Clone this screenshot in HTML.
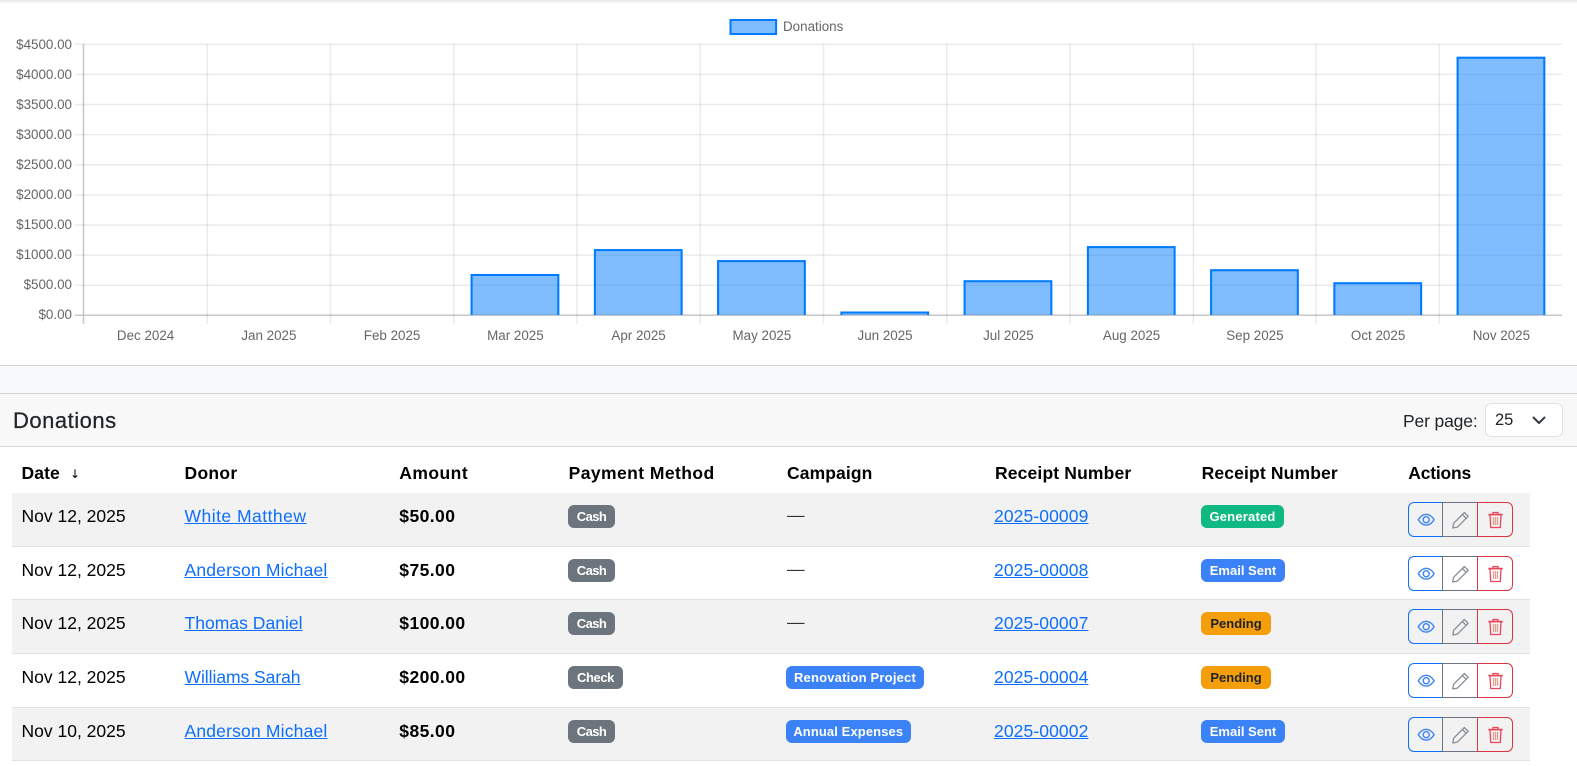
<!DOCTYPE html>
<html lang="en">
<head>
<meta charset="utf-8">
<title>Donations</title>
<style>
html,body{margin:0;padding:0;background:#fff;}
body{position:relative;width:1577px;height:766px;overflow:hidden;font-family:"Liberation Sans",Arial,sans-serif;color:#000;}
.abs{position:absolute;}
#shadow{left:0;top:0;width:1577px;height:4px;background:linear-gradient(#e6e6e6,#fff);}
#chart{left:0;top:0;}
#chart text{font-family:"Liberation Sans",Arial,sans-serif;font-size:13.4px;fill:#666;}
#band{left:0;top:365px;width:1577px;background:#f8f9fa;border-top:1px solid #d4d4d4;border-bottom:1px solid #d4d4d4;box-sizing:content-box;height:27px;}
#head{left:0;top:394px;width:1577px;height:53px;background:#f8f8f8;border-bottom:1px solid #d4d4d4;box-sizing:border-box;}
#title{left:13px;top:13px;font-size:22px;line-height:28px;color:#212529;letter-spacing:.5px;-webkit-text-stroke:.25px #212529;}
#pp{left:1403px;top:15px;font-size:17.5px;line-height:24px;color:#212529;letter-spacing:-.15px;}
#sel{left:1485px;top:9px;width:78px;height:34px;background:#fff;border:1px solid #dee2e6;border-radius:6px;box-sizing:border-box;}
#sel span{position:absolute;left:9px;top:4px;font-size:16.5px;line-height:24px;color:#212529;}
#sel svg{position:absolute;left:45px;top:11px;}
.th{top:461px;font-size:17.5px;font-weight:bold;line-height:24px;white-space:nowrap;}
.row{left:12px;width:1518px;box-sizing:border-box;border-bottom:1px solid #dee2e6;}
.odd{background:#f2f2f2;}
.c{position:absolute;top:11px;font-size:17.5px;line-height:24px;white-space:nowrap;color:#000;}
.c.b{font-weight:bold;letter-spacing:.42px;}
.c.dash{top:10px;left:775px;font-size:17.5px;color:#333;}
.c a{color:#0d6efd;text-decoration:underline;}
.pill{position:absolute;top:12px;height:23px;border-radius:6px;font-size:13px;font-weight:bold;line-height:24px;text-align:center;color:#fff;white-space:nowrap;}
.g{background:#6c757d;}.bl{background:#3b82f6;}.gr{background:#10b981;}.y{background:#f59e0b;color:#1f2328;}
.btns{position:absolute;left:1396px;top:9px;width:105px;height:35px;}
.btn{position:absolute;top:0;height:35px;box-sizing:border-box;border:1px solid;}
.v{left:0;width:35px;border-color:#0d6efd;border-radius:6px 0 0 6px;}
.e{left:34px;width:36px;border-color:#6c757d;}
.d{left:69px;width:36px;border-color:#dc3545;border-radius:0 6px 6px 0;}
.btn svg{position:absolute;left:0;top:0;}
</style>
</head>
<body>
<div id="shadow" class="abs"></div>

<svg id="chart" class="abs" width="1577" height="365" viewBox="0 0 1577 365">
  <g stroke="rgba(0,0,0,.08)" stroke-width="1.5" fill="none">
    <path d="M75 44.300H1562M75 74.400H1562M75 104.500H1562M75 134.600H1562M75 164.700H1562M75 194.900H1562M75 225H1562M75 255.100H1562M75 285.200H1562"/>
    <path d="M207.300 44V324M330.500 44V324M453.800 44V324M577 44V324M700.300 44V324M823.500 44V324M946.800 44V324M1070 44V324M1193.300 44V324M1316 44V324M1439.300 44V324"/>
  </g>
  <g stroke="rgba(0,0,0,.22)" stroke-width="1.500" fill="none">
    <path d="M83.500 44V324M75 315.300H1562"/>
  </g>
  <g fill="rgba(0,123,255,.5)">
    <rect x="470.600" y="274" width="88.700" height="41"/>
    <rect x="593.900" y="249.100" width="88.700" height="65.900"/>
    <rect x="717.100" y="260.100" width="88.700" height="54.900"/>
    <rect x="840.400" y="311.500" width="88.700" height="3.500"/>
    <rect x="963.600" y="280.300" width="88.700" height="34.700"/>
    <rect x="1086.900" y="246.100" width="88.700" height="68.900"/>
    <rect x="1210.100" y="269.200" width="88.700" height="45.800"/>
    <rect x="1333.400" y="282.200" width="88.700" height="32.800"/>
    <rect x="1456.600" y="56.700" width="88.700" height="258.300"/>
  </g>
  <g fill="none" stroke="#007bff" stroke-width="2">
    <path d="M471.600 315V275H558.300V315"/>
    <path d="M594.900 315V250.100H681.600V315"/>
    <path d="M718.100 315V261.100H804.800V315"/>
    <path d="M841.400 315V312.500H928.100V315"/>
    <path d="M964.600 315V281.300H1051.300V315"/>
    <path d="M1087.900 315V247.100H1174.600V315"/>
    <path d="M1211.100 315V270.200H1297.800V315"/>
    <path d="M1334.400 315V283.200H1421.100V315"/>
    <path d="M1457.600 315V57.700H1544.300V315"/>
  </g>
  <g text-anchor="end">
    <text x="72" y="49">$4500.00</text>
    <text x="72" y="79">$4000.00</text>
    <text x="72" y="109">$3500.00</text>
    <text x="72" y="139">$3000.00</text>
    <text x="72" y="169">$2500.00</text>
    <text x="72" y="199">$2000.00</text>
    <text x="72" y="229">$1500.00</text>
    <text x="72" y="259">$1000.00</text>
    <text x="72" y="289">$500.00</text>
    <text x="72" y="319">$0.00</text>
  </g>
  <g text-anchor="middle">
    <text x="145.600" y="340">Dec 2024</text>
    <text x="268.900" y="340">Jan 2025</text>
    <text x="392.100" y="340">Feb 2025</text>
    <text x="515.400" y="340">Mar 2025</text>
    <text x="638.600" y="340">Apr 2025</text>
    <text x="761.900" y="340">May 2025</text>
    <text x="885.100" y="340">Jun 2025</text>
    <text x="1008.400" y="340">Jul 2025</text>
    <text x="1131.600" y="340">Aug 2025</text>
    <text x="1254.900" y="340">Sep 2025</text>
    <text x="1378.100" y="340">Oct 2025</text>
    <text x="1501.400" y="340">Nov 2025</text>
  </g>
  <rect x="730.500" y="20" width="45.600" height="14" fill="rgba(0,123,255,.5)" stroke="#007bff" stroke-width="2"/>
  <text x="783" y="31">Donations</text>
</svg>

<div id="band" class="abs"></div>
<div id="head" class="abs">
  <div id="title" class="abs">Donations</div>
  <div id="pp" class="abs">Per page:</div>
  <div id="sel" class="abs"><span>25</span>
    <svg width="16" height="12" viewBox="0 0 16 12"><path d="M2.500 2.500L8 8l5.500-5.500" fill="none" stroke="#343a40" stroke-width="2" stroke-linecap="round" stroke-linejoin="round"/></svg>
  </div>
</div>

<div class="abs th" style="left:21.500px;letter-spacing:.1px">Date</div>
<div class="abs th" style="left:70px;top:462px;font-size:12px;font-weight:normal;font-family:'DejaVu Sans',sans-serif">↓</div>
<div class="abs th" style="left:184.500px;letter-spacing:.3px">Donor</div>
<div class="abs th" style="left:399.300px;letter-spacing:.45px">Amount</div>
<div class="abs th" style="left:568.600px;letter-spacing:.43px">Payment Method</div>
<div class="abs th" style="left:787px;letter-spacing:.1px">Campaign</div>
<div class="abs th" style="left:995px;letter-spacing:.15px">Receipt Number</div>
<div class="abs th" style="left:1201.600px;letter-spacing:.15px">Receipt Number</div>
<div class="abs th" style="left:1408.300px;letter-spacing:-.2px">Actions</div>

<div class="abs row odd" style="top:493px;height:54px">
  <div class="c" style="left:9.500px">Nov 12, 2025</div>
  <div class="c" style="left:172.500px;letter-spacing:.48px"><a>White Matthew</a></div>
  <div class="c b" style="left:387.300px">$50.00</div>
  <div class="pill g" style="left:556px;width:47px;letter-spacing:-.6px">Cash</div>
  <div class="c dash">—</div>
  <div class="c" style="left:982px;letter-spacing:.1px"><a>2025-00009</a></div>
  <div class="pill gr" style="left:1189px;width:83px;letter-spacing:.2px">Generated</div>
  <div class="btns">
    <div class="btn v"><svg width="33" height="33" viewBox="0 0 33 33"><g fill="none" stroke="#3d84fb" stroke-width="1.400"><path d="M9.300 16.700c2-3.200 4.800-5.400 7.900-5.400s5.900 2.200 7.900 5.400c-2 3.200-4.800 5.400-7.900 5.400s-5.900-2.200-7.900-5.400z"/><circle cx="17.200" cy="16.700" r="3"/></g></svg></div>
    <div class="btn e"><svg width="34" height="33" viewBox="0 0 34 33"><g fill="none" stroke="#868e96" stroke-width="1.300" stroke-linejoin="round"><path d="M21.400 9.500l3.800 3.800-10.800 10.800-4.600.9.800-4.700z"/><path d="M19.400 11.500l3.800 3.800"/></g></svg></div>
    <div class="btn d"><svg width="34" height="33" viewBox="0 0 34 33"><g fill="none" stroke="#e8475b" stroke-width="1.300"><path d="M10.300 11.600H24.700" stroke-width="1.700"/><path d="M15 11V9.500h5V11"/><path d="M12 11.800l.7 12.700h9.600l.7-12.700"/><path d="M15.500 14v8M17.500 14v8M19.500 14v8" stroke="#e0a090"/></g></svg></div>
  </div>
</div>

<div class="abs row" style="top:547px;height:53px">
  <div class="c" style="left:9.500px">Nov 12, 2025</div>
  <div class="c" style="left:172.500px;letter-spacing:.18px"><a>Anderson Michael</a></div>
  <div class="c b" style="left:387.300px">$75.00</div>
  <div class="pill g" style="left:556px;width:47px;letter-spacing:-.6px">Cash</div>
  <div class="c dash">—</div>
  <div class="c" style="left:982px;letter-spacing:.1px"><a>2025-00008</a></div>
  <div class="pill bl" style="left:1189px;width:84px">Email Sent</div>
  <div class="btns">
    <div class="btn v"><svg width="33" height="33" viewBox="0 0 33 33"><g fill="none" stroke="#3d84fb" stroke-width="1.400"><path d="M9.300 16.700c2-3.200 4.800-5.400 7.900-5.400s5.900 2.200 7.900 5.400c-2 3.200-4.800 5.400-7.900 5.400s-5.900-2.200-7.900-5.400z"/><circle cx="17.200" cy="16.700" r="3"/></g></svg></div>
    <div class="btn e"><svg width="34" height="33" viewBox="0 0 34 33"><g fill="none" stroke="#868e96" stroke-width="1.300" stroke-linejoin="round"><path d="M21.400 9.500l3.800 3.800-10.800 10.800-4.600.9.800-4.700z"/><path d="M19.400 11.500l3.800 3.800"/></g></svg></div>
    <div class="btn d"><svg width="34" height="33" viewBox="0 0 34 33"><g fill="none" stroke="#e8475b" stroke-width="1.300"><path d="M10.300 11.600H24.700" stroke-width="1.700"/><path d="M15 11V9.500h5V11"/><path d="M12 11.800l.7 12.700h9.600l.7-12.700"/><path d="M15.500 14v8M17.500 14v8M19.500 14v8" stroke="#e0a090"/></g></svg></div>
  </div>
</div>

<div class="abs row odd" style="top:600px;height:54px">
  <div class="c" style="left:9.500px">Nov 12, 2025</div>
  <div class="c" style="left:172.500px;letter-spacing:.03px"><a>Thomas Daniel</a></div>
  <div class="c b" style="left:387.300px">$100.00</div>
  <div class="pill g" style="left:556px;width:47px;letter-spacing:-.6px">Cash</div>
  <div class="c dash">—</div>
  <div class="c" style="left:982px;letter-spacing:.1px"><a>2025-00007</a></div>
  <div class="pill y" style="left:1189px;width:70px">Pending</div>
  <div class="btns">
    <div class="btn v"><svg width="33" height="33" viewBox="0 0 33 33"><g fill="none" stroke="#3d84fb" stroke-width="1.400"><path d="M9.300 16.700c2-3.200 4.800-5.400 7.900-5.400s5.900 2.200 7.900 5.400c-2 3.200-4.800 5.400-7.900 5.400s-5.900-2.200-7.900-5.400z"/><circle cx="17.200" cy="16.700" r="3"/></g></svg></div>
    <div class="btn e"><svg width="34" height="33" viewBox="0 0 34 33"><g fill="none" stroke="#868e96" stroke-width="1.300" stroke-linejoin="round"><path d="M21.400 9.500l3.800 3.800-10.800 10.800-4.600.9.800-4.700z"/><path d="M19.400 11.500l3.800 3.800"/></g></svg></div>
    <div class="btn d"><svg width="34" height="33" viewBox="0 0 34 33"><g fill="none" stroke="#e8475b" stroke-width="1.300"><path d="M10.300 11.600H24.700" stroke-width="1.700"/><path d="M15 11V9.500h5V11"/><path d="M12 11.800l.7 12.700h9.600l.7-12.700"/><path d="M15.500 14v8M17.500 14v8M19.500 14v8" stroke="#e0a090"/></g></svg></div>
  </div>
</div>

<div class="abs row" style="top:654px;height:54px">
  <div class="c" style="left:9.500px">Nov 12, 2025</div>
  <div class="c" style="left:172.500px;letter-spacing:-.05px"><a>Williams Sarah</a></div>
  <div class="c b" style="left:387.300px">$200.00</div>
  <div class="pill g" style="left:556px;width:55px;letter-spacing:-.4px">Check</div>
  <div class="pill bl" style="left:774px;width:138px;letter-spacing:.2px">Renovation Project</div>
  <div class="c" style="left:982px;letter-spacing:.1px"><a>2025-00004</a></div>
  <div class="pill y" style="left:1189px;width:70px">Pending</div>
  <div class="btns">
    <div class="btn v"><svg width="33" height="33" viewBox="0 0 33 33"><g fill="none" stroke="#3d84fb" stroke-width="1.400"><path d="M9.300 16.700c2-3.200 4.800-5.400 7.900-5.400s5.900 2.200 7.900 5.400c-2 3.200-4.800 5.400-7.900 5.400s-5.900-2.200-7.900-5.400z"/><circle cx="17.200" cy="16.700" r="3"/></g></svg></div>
    <div class="btn e"><svg width="34" height="33" viewBox="0 0 34 33"><g fill="none" stroke="#868e96" stroke-width="1.300" stroke-linejoin="round"><path d="M21.400 9.500l3.800 3.800-10.800 10.800-4.600.9.800-4.700z"/><path d="M19.400 11.500l3.800 3.800"/></g></svg></div>
    <div class="btn d"><svg width="34" height="33" viewBox="0 0 34 33"><g fill="none" stroke="#e8475b" stroke-width="1.300"><path d="M10.300 11.600H24.700" stroke-width="1.700"/><path d="M15 11V9.500h5V11"/><path d="M12 11.800l.7 12.700h9.600l.7-12.700"/><path d="M15.500 14v8M17.500 14v8M19.500 14v8" stroke="#e0a090"/></g></svg></div>
  </div>
</div>

<div class="abs row odd" style="top:708px;height:53px">
  <div class="c" style="left:9.500px">Nov 10, 2025</div>
  <div class="c" style="left:172.500px;letter-spacing:.18px"><a>Anderson Michael</a></div>
  <div class="c b" style="left:387.300px">$85.00</div>
  <div class="pill g" style="left:556px;width:47px;letter-spacing:-.6px">Cash</div>
  <div class="pill bl" style="left:774px;width:124.500px;letter-spacing:.1px">Annual Expenses</div>
  <div class="c" style="left:982px;letter-spacing:.1px"><a>2025-00002</a></div>
  <div class="pill bl" style="left:1189px;width:84px">Email Sent</div>
  <div class="btns">
    <div class="btn v"><svg width="33" height="33" viewBox="0 0 33 33"><g fill="none" stroke="#3d84fb" stroke-width="1.400"><path d="M9.300 16.700c2-3.200 4.800-5.400 7.900-5.400s5.900 2.200 7.900 5.400c-2 3.200-4.800 5.400-7.900 5.400s-5.900-2.200-7.900-5.400z"/><circle cx="17.200" cy="16.700" r="3"/></g></svg></div>
    <div class="btn e"><svg width="34" height="33" viewBox="0 0 34 33"><g fill="none" stroke="#868e96" stroke-width="1.300" stroke-linejoin="round"><path d="M21.400 9.500l3.800 3.800-10.800 10.800-4.600.9.800-4.700z"/><path d="M19.400 11.500l3.800 3.800"/></g></svg></div>
    <div class="btn d"><svg width="34" height="33" viewBox="0 0 34 33"><g fill="none" stroke="#e8475b" stroke-width="1.300"><path d="M10.300 11.600H24.700" stroke-width="1.700"/><path d="M15 11V9.500h5V11"/><path d="M12 11.800l.7 12.700h9.600l.7-12.700"/><path d="M15.500 14v8M17.500 14v8M19.500 14v8" stroke="#e0a090"/></g></svg></div>
  </div>
</div>
</body>
</html>
